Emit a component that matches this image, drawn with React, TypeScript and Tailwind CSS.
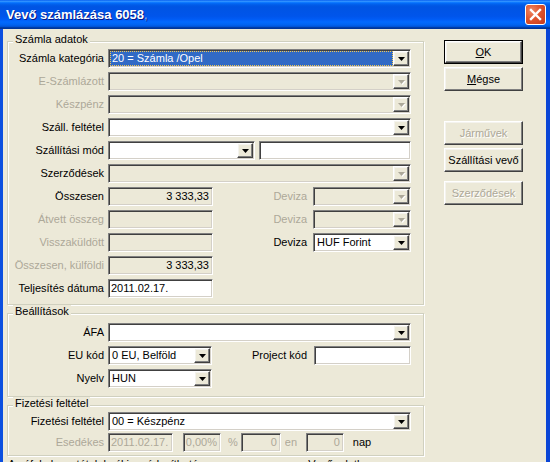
import React from "react";

const sunken =
  "border border-t-[#808080] border-l-[#808080] border-b-white border-r-white shadow-[inset_1px_1px_0_#404040,inset_-1px_-1px_0_#d4d0c8] p-px";

const raised =
  "bg-[#ece9d8] border border-t-white border-l-white border-b-[#404040] border-r-[#404040] shadow-[inset_-1px_-1px_0_#808080,inset_1px_1px_0_#f4f3ee]";

const Arrow = ({ disabled }: { disabled?: boolean }) => (
  <div className={`${raised} w-[16px] h-full flex items-center justify-center shrink-0`}>
    <svg width="7" height="4" viewBox="0 0 7 4" className={disabled ? "drop-shadow-[1px_1px_0_#fff]" : ""}>
      <polygon points="0,0 7,0 3.5,4" fill={disabled ? "#aca899" : "#000"} />
    </svg>
  </div>
);

type ComboProps = {
  className: string;
  value?: string;
  disabled?: boolean;
  focused?: boolean;
};

const Combo = ({ className, value = "", disabled, focused }: ComboProps) => (
  <div
    className={`${sunken} flex h-[19px] ${disabled ? "bg-[#ece9d8]" : "bg-white"} ${className}`}
  >
    <div className="flex-1 min-w-0 flex items-center">
      {focused ? (
        <div className="h-full w-full bg-[#316ac5] text-white border border-dotted border-[#f2c851] pl-px flex items-center whitespace-nowrap">
          {value}
        </div>
      ) : (
        <span className="pl-[2px] whitespace-nowrap">{value}</span>
      )}
    </div>
    <Arrow disabled={disabled} />
  </div>
);

type BoxProps = {
  className: string;
  value?: string;
  disabled?: boolean;
  right?: boolean;
  grey?: boolean;
};

const Box = ({ className, value = "", disabled, right, grey }: BoxProps) => (
  <div
    className={`${sunken} h-[19px] flex items-center whitespace-nowrap ${
      disabled ? "bg-[#ece9d8]" : "bg-white"
    } ${right ? "justify-end pr-[3px]" : "pl-[2px]"} ${grey ? "text-[#aca899]" : ""} ${className}`}
  >
    {value}
  </div>
);

const Label = ({
  children,
  grey,
  className = "w-[96px]",
}: {
  children: React.ReactNode;
  grey?: boolean;
  className?: string;
}) => (
  <div
    className={`${className} shrink-0 text-right whitespace-nowrap ${grey ? "text-[#aca899]" : ""}`}
  >
    {children}
  </div>
);

const Row = ({ children }: { children: React.ReactNode }) => (
  <div className="flex items-center h-[19px]">{children}</div>
);

const Group = ({
  title,
  className,
  children,
}: {
  title: string;
  className: string;
  children: React.ReactNode;
}) => (
  <div
    className={`relative border border-[#d0d0bf] shadow-[inset_1px_1px_0_#fff,1px_1px_0_#fff] ${className}`}
  >
    <span className="absolute -top-[9px] left-[5px] px-[2px] bg-[#ece9d8] leading-[13px]">
      {title}
    </span>
    {children}
  </div>
);

const Button = ({
  children,
  disabled,
  isDefault,
  className,
}: {
  children: React.ReactNode;
  disabled?: boolean;
  isDefault?: boolean;
  className?: string;
}) => (
  <div
    className={`w-[79px] h-[24px] ${isDefault ? "border border-black" : ""} ${className ?? ""}`}
  >
    <div
      className={`${raised} w-full h-full flex items-center justify-center whitespace-nowrap ${
        disabled ? "text-[#aca899] [text-shadow:1px_1px_0_#fff]" : ""
      }`}
    >
      {children}
    </div>
  </div>
);

export default function App() {
  return (
    <div className="w-[550px] h-[462px] overflow-hidden bg-[#ece9d8] font-['Liberation_Sans',Arial,sans-serif] text-[11px] leading-[13px] text-black select-none">
      <div className="h-[29px] flex items-center justify-between pl-[6px] pr-[4px] bg-[linear-gradient(to_bottom,#0058ee_0%,#3593ff_4%,#288eff_6%,#127dff_8%,#036ffc_10%,#0262ee_14%,#0057e5_20%,#0054e3_24%,#0055eb_56%,#005bf5_66%,#026afe_76%,#0062ef_86%,#0052d6_92%,#0040ab_94%,#003092_100%)]">
        <span className="text-white font-bold text-[13px] [text-shadow:1px_1px_0_#0a1883]">
          Vevő számlázása 6058<span className="text-[#8fb6f5] font-normal">,</span>
        </span>
        <div className="w-[21px] h-[21px] rounded-[3px] border border-white flex items-center justify-center bg-[radial-gradient(circle_at_30%_30%,#ee8866_0%,#e0552e_45%,#c6391a_100%)]">
          <svg width="13" height="13" viewBox="0 0 13 13">
            <path d="M2 2 L11 11 M11 2 L2 11" stroke="#fff" strokeWidth="2.4" strokeLinecap="square" />
          </svg>
        </div>
      </div>

      <div className="flex h-[433px] border-l-[3px] border-l-[#0b4fe0] border-r-[4px] border-r-[#0a45d6] pl-[4px]">
        <div className="w-[417px] shrink-0 pt-[12px] flex flex-col">
          <Group title="Számla adatok" className="pt-[7px] pb-[6px] flex flex-col gap-[4px]">
            <Row>
              <Label>Számla kategória</Label>
              <Combo className="ml-[4px] w-[303px]" value="20 = Számla /Opel" focused />
            </Row>
            <Row>
              <Label grey>E-Számlázott</Label>
              <Combo className="ml-[4px] w-[303px]" disabled />
            </Row>
            <Row>
              <Label grey>Készpénz</Label>
              <Combo className="ml-[4px] w-[303px]" disabled />
            </Row>
            <Row>
              <Label>Száll. feltétel</Label>
              <Combo className="ml-[4px] w-[303px]" />
            </Row>
            <Row>
              <Label>Szállítási mód</Label>
              <Combo className="ml-[4px] w-[147px]" />
              <Box className="ml-[4px] w-[152px]" />
            </Row>
            <Row>
              <Label>Szerződések</Label>
              <Combo className="ml-[4px] w-[303px]" disabled />
            </Row>
            <Row>
              <Label>Összesen</Label>
              <Box className="ml-[4px] w-[105px]" value="3 333,33" disabled right />
              <Label grey className="w-[94px]">Deviza</Label>
              <Combo className="ml-[6px] w-[98px]" disabled />
            </Row>
            <Row>
              <Label grey>Átvett összeg</Label>
              <Box className="ml-[4px] w-[105px]" disabled />
              <Label grey className="w-[94px]">Deviza</Label>
              <Combo className="ml-[6px] w-[98px]" disabled />
            </Row>
            <Row>
              <Label grey>Visszaküldött</Label>
              <Box className="ml-[4px] w-[105px]" disabled />
              <Label className="w-[94px]">Deviza</Label>
              <Combo className="ml-[6px] w-[98px]" value="HUF Forint" />
            </Row>
            <Row>
              <Label grey>Összesen, külföldi</Label>
              <Box className="ml-[4px] w-[105px]" value="3 333,33" disabled right />
            </Row>
            <Row>
              <Label>Teljesítés dátuma</Label>
              <Box className="ml-[4px] w-[105px]" value="2011.02.17." />
            </Row>
          </Group>

          <Group title="Beállítások" className="mt-[8px] pt-[9px] pb-[8px] flex flex-col gap-[4px]">
            <Row>
              <Label>ÁFA</Label>
              <Combo className="ml-[4px] w-[303px]" />
            </Row>
            <Row>
              <Label>EU kód</Label>
              <Combo className="ml-[4px] w-[104px]" value="0 EU, Belföld" />
              <Label className="w-[95px]">Project kód</Label>
              <Box className="ml-[7px] w-[97px]" />
            </Row>
            <Row>
              <Label>Nyelv</Label>
              <Combo className="ml-[4px] w-[104px]" value="HUN" />
            </Row>
          </Group>

          <Group title="Fizetési feltétel" className="mt-[8px] pt-[6px] pb-[3px] flex flex-col gap-[2px]">
            <Row>
              <Label>Fizetési feltétel</Label>
              <Combo className="ml-[4px] w-[303px]" value="00 = Készpénz" />
            </Row>
            <Row>
              <Label grey>Esedékes</Label>
              <Box className="ml-[4px] w-[65px]" value="2011.02.17." disabled grey />
              <Box className="ml-[10px] w-[38px]" value="0,00%" disabled grey right />
              <span className="ml-[7px] text-[#aca899]">%</span>
              <Box className="ml-[3px] w-[40px]" value="0" disabled grey right />
              <span className="ml-[4px] w-[12px] overflow-hidden whitespace-nowrap text-[#aca899]">enyi</span>
              <Box className="ml-[9px] w-[38px]" value="0" disabled grey right />
              <span className="ml-[9px]">nap</span>
            </Row>
          </Group>
          <div className="mt-[2px] pl-[1px] whitespace-nowrap">
            Az áfakulcs a tételeknél is módosítható
            <span className="ml-[110px]">Vevő adatlap</span>
          </div>
        </div>

        <div className="ml-[20px] pt-[11px] flex flex-col">
          <Button isDefault>
            <span className="underline">O</span>K
          </Button>
          <Button className="mt-[3px]">
            <span className="underline">M</span>égse
          </Button>
          <Button className="mt-[30px]" disabled>
            Járművek
          </Button>
          <Button className="mt-[3px]">Szállítási vevő</Button>
          <Button className="mt-[9px]" disabled>
            Szerződések
          </Button>
        </div>
      </div>
    </div>
  );
}
